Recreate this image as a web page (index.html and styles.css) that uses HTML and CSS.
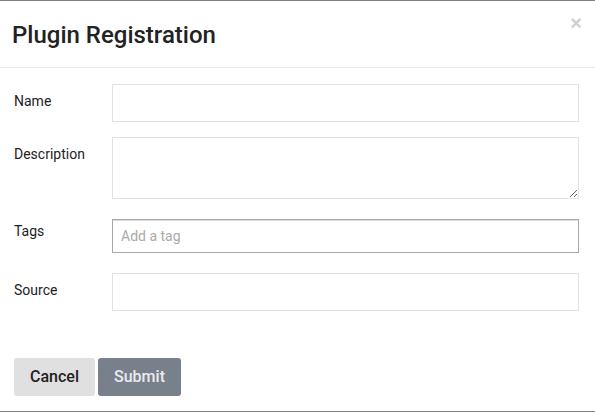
FILE: index.html
```html
<!DOCTYPE html>
<html>
<head>
<meta charset="utf-8">
<link rel="stylesheet" href="styles.css">
</head>
<body>
<div class="modal">
  <div class="modal-header">
    <h4 class="modal-title">Plugin Registration</h4>
    <button class="close" type="button">&times;</button>
  </div>
  <form class="modal-body">
    <div class="row row-name">
      <label class="label">Name</label>
      <input class="field field-name" type="text">
    </div>
    <div class="row row-desc">
      <label class="label">Description</label>
      <textarea class="field field-desc"></textarea>
    </div>
    <div class="row row-tags">
      <label class="label label-tags">Tags</label>
      <input class="field field-tags" type="text" placeholder="Add a tag">
    </div>
    <div class="row row-source">
      <label class="label">Source</label>
      <input class="field field-source" type="text">
    </div>
    <div class="footer">
      <button class="btn btn-cancel" type="button">Cancel</button>
      <button class="btn btn-submit" type="button">Submit</button>
    </div>
  </form>
</div>
</body>
</html>
```
FILE: styles.css
```css
html, body {
  margin: 0;
  padding: 0;
  background: #fff;
}
body {
  font-family: Roboto, "Liberation Sans", Arial, sans-serif;
  color: #222;
}
.modal {
  box-sizing: border-box;
  width: 595px;
  height: 412px;
  border-top: 1px solid #7d7d7d;
  border-bottom: 1px solid #7d7d7d;
  background: #fff;
}
.modal-header {
  position: relative;
  height: 66px;
  border-bottom: 1px solid #e9e9e9;
  display: flex;
  align-items: center;
  padding: 0 12px;
}
.modal-title {
  margin: 0;
  font-size: 24px;
  font-weight: 500;
  color: #222;
  line-height: 1;
  padding-top: 1px;
}
.close {
  position: absolute;
  right: 13px;
  top: 12px;
  border: 0;
  background: none;
  padding: 0;
  font-family: "Liberation Sans", Arial, sans-serif;
  font-size: 20px;
  font-weight: bold;
  line-height: 1;
  color: #cfcfcf;
}
.modal-body {
  margin: 0;
  padding: 16px 16px 0 14px;
}
.row {
  display: grid;
  grid-template-columns: 98px 1fr;
  align-items: start;
}
.row-name { margin-bottom: 15px; }
.row-desc { margin-bottom: 20px; }
.row-tags { margin-bottom: 20px; }
.label {
  font-size: 14px;
  line-height: 20px;
  padding-top: 7px;
  color: #222;
}
.label-tags { padding-top: 2px; }
.field {
  box-sizing: border-box;
  display: block;
  width: 100%;
  margin: 0;
  border: 1px solid #e2e2e2;
  background: #fff;
  font-family: Roboto, "Liberation Sans", Arial, sans-serif;
  font-size: 14px;
  color: #222;
  padding: 0 8px;
  outline: none;
}
.field-name, .field-source { height: 38px; }
.field-desc { height: 62px; resize: vertical; padding: 6px 8px; }
.field-tags {
  height: 34px;
  border: 1px solid #a8a8a8;
  box-shadow: inset 0 1px 0 #dcdcdc;
}
.field-tags::placeholder { color: #a9a9a9; }
.footer {
  display: flex;
  gap: 3px;
  margin-top: 47px;
}
.btn {
  height: 38px;
  border: 0;
  border-radius: 3px;
  font-family: Roboto, "Liberation Sans", Arial, sans-serif;
  font-size: 16px;
  font-weight: 500;
  padding: 0 0 2px;
}
.btn-cancel {
  width: 81px;
  background: #e0e0e0;
  color: #222;
}
.btn-submit {
  width: 83px;
  background: #78818b;
  color: #e9ebee;
}
```
